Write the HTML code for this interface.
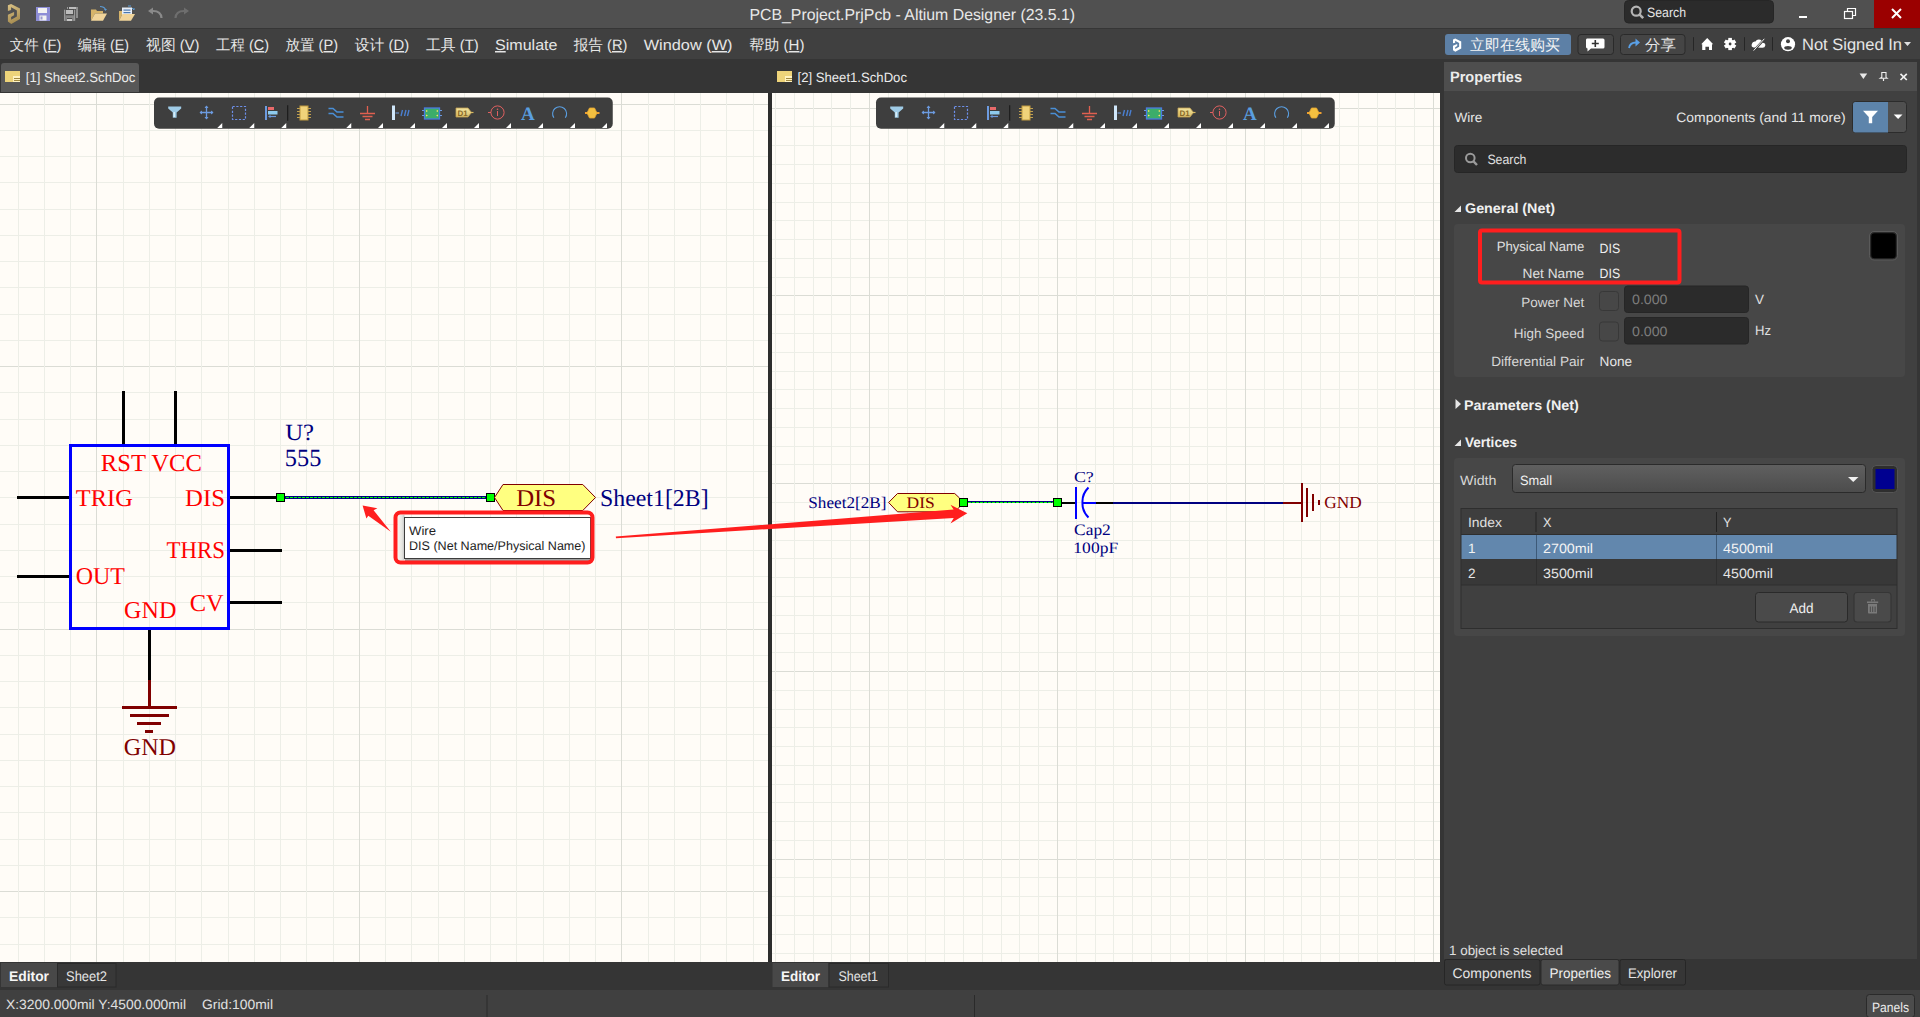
<!DOCTYPE html><html><head><meta charset="utf-8"><style>html,body{margin:0;padding:0;background:#3a3a3a;overflow:hidden}svg{display:block}text{text-rendering:geometricPrecision}</style></head><body><svg width="1920" height="1017" viewBox="0 0 1920 1017"><rect x="0" y="0" width="1920" height="28" fill="#505050" />
<rect x="0" y="28" width="1920" height="1" fill="#363636" />
<rect x="0" y="29" width="1920" height="30" fill="#404040" />
<rect x="0" y="59" width="1444" height="34" fill="#353535" />
<rect x="1440" y="59" width="480" height="903" fill="#353535" />
<rect x="0" y="961" width="1444" height="29" fill="#353535" />
<rect x="0" y="990" width="1920" height="27" fill="#404040" />
<rect x="0" y="93" width="768" height="869" fill="#fffcf7" />
<rect x="0" y="104" width="768" height="1" fill="#dbdcd5"/>
<rect x="0" y="130" width="768" height="1" fill="#edeee7"/>
<rect x="0" y="156" width="768" height="1" fill="#edeee7"/>
<rect x="0" y="182" width="768" height="1" fill="#edeee7"/>
<rect x="0" y="209" width="768" height="1" fill="#edeee7"/>
<rect x="0" y="235" width="768" height="1" fill="#edeee7"/>
<rect x="0" y="261" width="768" height="1" fill="#edeee7"/>
<rect x="0" y="287" width="768" height="1" fill="#edeee7"/>
<rect x="0" y="314" width="768" height="1" fill="#edeee7"/>
<rect x="0" y="340" width="768" height="1" fill="#edeee7"/>
<rect x="0" y="366" width="768" height="1" fill="#dbdcd5"/>
<rect x="0" y="392" width="768" height="1" fill="#edeee7"/>
<rect x="0" y="419" width="768" height="1" fill="#edeee7"/>
<rect x="0" y="445" width="768" height="1" fill="#edeee7"/>
<rect x="0" y="471" width="768" height="1" fill="#edeee7"/>
<rect x="0" y="497" width="768" height="1" fill="#edeee7"/>
<rect x="0" y="524" width="768" height="1" fill="#edeee7"/>
<rect x="0" y="550" width="768" height="1" fill="#edeee7"/>
<rect x="0" y="576" width="768" height="1" fill="#edeee7"/>
<rect x="0" y="602" width="768" height="1" fill="#edeee7"/>
<rect x="0" y="629" width="768" height="1" fill="#dbdcd5"/>
<rect x="0" y="655" width="768" height="1" fill="#edeee7"/>
<rect x="0" y="681" width="768" height="1" fill="#edeee7"/>
<rect x="0" y="707" width="768" height="1" fill="#edeee7"/>
<rect x="0" y="734" width="768" height="1" fill="#edeee7"/>
<rect x="0" y="760" width="768" height="1" fill="#edeee7"/>
<rect x="0" y="786" width="768" height="1" fill="#edeee7"/>
<rect x="0" y="812" width="768" height="1" fill="#edeee7"/>
<rect x="0" y="839" width="768" height="1" fill="#edeee7"/>
<rect x="0" y="865" width="768" height="1" fill="#edeee7"/>
<rect x="0" y="891" width="768" height="1" fill="#dbdcd5"/>
<rect x="0" y="917" width="768" height="1" fill="#edeee7"/>
<rect x="0" y="944" width="768" height="1" fill="#edeee7"/>
<rect x="18" y="93" width="1" height="869" fill="#edeee7"/>
<rect x="44" y="93" width="1" height="869" fill="#edeee7"/>
<rect x="70" y="93" width="1" height="869" fill="#edeee7"/>
<rect x="96" y="93" width="1" height="869" fill="#dbdcd5"/>
<rect x="123" y="93" width="1" height="869" fill="#edeee7"/>
<rect x="149" y="93" width="1" height="869" fill="#edeee7"/>
<rect x="175" y="93" width="1" height="869" fill="#edeee7"/>
<rect x="201" y="93" width="1" height="869" fill="#edeee7"/>
<rect x="228" y="93" width="1" height="869" fill="#edeee7"/>
<rect x="254" y="93" width="1" height="869" fill="#edeee7"/>
<rect x="280" y="93" width="1" height="869" fill="#edeee7"/>
<rect x="306" y="93" width="1" height="869" fill="#edeee7"/>
<rect x="333" y="93" width="1" height="869" fill="#edeee7"/>
<rect x="359" y="93" width="1" height="869" fill="#dbdcd5"/>
<rect x="385" y="93" width="1" height="869" fill="#edeee7"/>
<rect x="411" y="93" width="1" height="869" fill="#edeee7"/>
<rect x="438" y="93" width="1" height="869" fill="#edeee7"/>
<rect x="464" y="93" width="1" height="869" fill="#edeee7"/>
<rect x="490" y="93" width="1" height="869" fill="#edeee7"/>
<rect x="516" y="93" width="1" height="869" fill="#edeee7"/>
<rect x="543" y="93" width="1" height="869" fill="#edeee7"/>
<rect x="569" y="93" width="1" height="869" fill="#edeee7"/>
<rect x="595" y="93" width="1" height="869" fill="#edeee7"/>
<rect x="621" y="93" width="1" height="869" fill="#dbdcd5"/>
<rect x="648" y="93" width="1" height="869" fill="#edeee7"/>
<rect x="674" y="93" width="1" height="869" fill="#edeee7"/>
<rect x="700" y="93" width="1" height="869" fill="#edeee7"/>
<rect x="726" y="93" width="1" height="869" fill="#edeee7"/>
<rect x="753" y="93" width="1" height="869" fill="#edeee7"/>
<rect x="768" y="93" width="4" height="869" fill="#2d2d2d" />
<rect x="772" y="93" width="668" height="869" fill="#fffcf7" />
<rect x="772" y="108" width="668" height="1" fill="#dbdcd5"/>
<rect x="772" y="126" width="668" height="1" fill="#edeee7"/>
<rect x="772" y="145" width="668" height="1" fill="#edeee7"/>
<rect x="772" y="164" width="668" height="1" fill="#edeee7"/>
<rect x="772" y="183" width="668" height="1" fill="#edeee7"/>
<rect x="772" y="202" width="668" height="1" fill="#edeee7"/>
<rect x="772" y="220" width="668" height="1" fill="#edeee7"/>
<rect x="772" y="239" width="668" height="1" fill="#edeee7"/>
<rect x="772" y="258" width="668" height="1" fill="#edeee7"/>
<rect x="772" y="277" width="668" height="1" fill="#edeee7"/>
<rect x="772" y="295" width="668" height="1" fill="#dbdcd5"/>
<rect x="772" y="314" width="668" height="1" fill="#edeee7"/>
<rect x="772" y="333" width="668" height="1" fill="#edeee7"/>
<rect x="772" y="352" width="668" height="1" fill="#edeee7"/>
<rect x="772" y="371" width="668" height="1" fill="#edeee7"/>
<rect x="772" y="389" width="668" height="1" fill="#edeee7"/>
<rect x="772" y="408" width="668" height="1" fill="#edeee7"/>
<rect x="772" y="427" width="668" height="1" fill="#edeee7"/>
<rect x="772" y="446" width="668" height="1" fill="#edeee7"/>
<rect x="772" y="464" width="668" height="1" fill="#edeee7"/>
<rect x="772" y="483" width="668" height="1" fill="#dbdcd5"/>
<rect x="772" y="502" width="668" height="1" fill="#edeee7"/>
<rect x="772" y="521" width="668" height="1" fill="#edeee7"/>
<rect x="772" y="540" width="668" height="1" fill="#edeee7"/>
<rect x="772" y="558" width="668" height="1" fill="#edeee7"/>
<rect x="772" y="577" width="668" height="1" fill="#edeee7"/>
<rect x="772" y="596" width="668" height="1" fill="#edeee7"/>
<rect x="772" y="615" width="668" height="1" fill="#edeee7"/>
<rect x="772" y="633" width="668" height="1" fill="#edeee7"/>
<rect x="772" y="652" width="668" height="1" fill="#edeee7"/>
<rect x="772" y="671" width="668" height="1" fill="#dbdcd5"/>
<rect x="772" y="690" width="668" height="1" fill="#edeee7"/>
<rect x="772" y="709" width="668" height="1" fill="#edeee7"/>
<rect x="772" y="727" width="668" height="1" fill="#edeee7"/>
<rect x="772" y="746" width="668" height="1" fill="#edeee7"/>
<rect x="772" y="765" width="668" height="1" fill="#edeee7"/>
<rect x="772" y="784" width="668" height="1" fill="#edeee7"/>
<rect x="772" y="802" width="668" height="1" fill="#edeee7"/>
<rect x="772" y="821" width="668" height="1" fill="#edeee7"/>
<rect x="772" y="840" width="668" height="1" fill="#edeee7"/>
<rect x="772" y="859" width="668" height="1" fill="#dbdcd5"/>
<rect x="772" y="877" width="668" height="1" fill="#edeee7"/>
<rect x="772" y="896" width="668" height="1" fill="#edeee7"/>
<rect x="772" y="915" width="668" height="1" fill="#edeee7"/>
<rect x="772" y="934" width="668" height="1" fill="#edeee7"/>
<rect x="772" y="953" width="668" height="1" fill="#edeee7"/>
<rect x="775" y="93" width="1" height="869" fill="#edeee7"/>
<rect x="794" y="93" width="1" height="869" fill="#edeee7"/>
<rect x="813" y="93" width="1" height="869" fill="#edeee7"/>
<rect x="831" y="93" width="1" height="869" fill="#edeee7"/>
<rect x="850" y="93" width="1" height="869" fill="#edeee7"/>
<rect x="869" y="93" width="1" height="869" fill="#dbdcd5"/>
<rect x="888" y="93" width="1" height="869" fill="#edeee7"/>
<rect x="907" y="93" width="1" height="869" fill="#edeee7"/>
<rect x="925" y="93" width="1" height="869" fill="#edeee7"/>
<rect x="944" y="93" width="1" height="869" fill="#edeee7"/>
<rect x="963" y="93" width="1" height="869" fill="#edeee7"/>
<rect x="982" y="93" width="1" height="869" fill="#edeee7"/>
<rect x="1001" y="93" width="1" height="869" fill="#edeee7"/>
<rect x="1019" y="93" width="1" height="869" fill="#edeee7"/>
<rect x="1038" y="93" width="1" height="869" fill="#edeee7"/>
<rect x="1057" y="93" width="1" height="869" fill="#dbdcd5"/>
<rect x="1076" y="93" width="1" height="869" fill="#edeee7"/>
<rect x="1095" y="93" width="1" height="869" fill="#edeee7"/>
<rect x="1113" y="93" width="1" height="869" fill="#edeee7"/>
<rect x="1132" y="93" width="1" height="869" fill="#edeee7"/>
<rect x="1151" y="93" width="1" height="869" fill="#edeee7"/>
<rect x="1170" y="93" width="1" height="869" fill="#edeee7"/>
<rect x="1189" y="93" width="1" height="869" fill="#edeee7"/>
<rect x="1207" y="93" width="1" height="869" fill="#edeee7"/>
<rect x="1226" y="93" width="1" height="869" fill="#edeee7"/>
<rect x="1245" y="93" width="1" height="869" fill="#dbdcd5"/>
<rect x="1264" y="93" width="1" height="869" fill="#edeee7"/>
<rect x="1283" y="93" width="1" height="869" fill="#edeee7"/>
<rect x="1301" y="93" width="1" height="869" fill="#edeee7"/>
<rect x="1320" y="93" width="1" height="869" fill="#edeee7"/>
<rect x="1339" y="93" width="1" height="869" fill="#edeee7"/>
<rect x="1358" y="93" width="1" height="869" fill="#edeee7"/>
<rect x="1377" y="93" width="1" height="869" fill="#edeee7"/>
<rect x="1395" y="93" width="1" height="869" fill="#edeee7"/>
<rect x="1414" y="93" width="1" height="869" fill="#edeee7"/>
<rect x="1433" y="93" width="1" height="869" fill="#dbdcd5"/>
<defs><linearGradient id="gold" x1="0" y1="0" x2="0.3" y2="1"><stop offset="0" stop-color="#dcc487"/><stop offset="1" stop-color="#a88e52"/></linearGradient></defs>
<path d="M7.9,5.3 L11.1,3.9 L11.1,10 L7.9,10.9 Z M11.1,3.9 L20,8.4 L16.9,10.5 L11.1,7.2 Z M16.9,10.5 L20,8.4 L20,19 L16.9,16.4 Z M16.9,16.4 L20,19 L11.3,23.9 L11.1,19.7 Z M7.9,14.7 L11.1,17.1 L11.3,23.9 L7.9,21.6 Z M7.9,14.7 L14.1,11.9 L14.1,15.2 L11.1,17.1 Z" fill="url(#gold)"/>
<rect x="36" y="7" width="14" height="14" fill="#8d8dd6" />
<rect x="38" y="8" width="9" height="5" fill="#f2f2f2" />
<rect x="39.5" y="15.5" width="7" height="5" fill="#f2f2f2" />
<rect x="40.5" y="16.5" width="2" height="3" fill="#9a9ad0" />
<rect x="64" y="9.7" width="1.3" height="11.2" fill="#9a9a9a" />
<rect x="74" y="9.7" width="1.2" height="11.2" fill="#9a9a9a" />
<rect x="66" y="10" width="7" height="4" fill="#bdbdbd" />
<rect x="65.3" y="15.3" width="8.7" height="2.7" fill="#888888" />
<rect x="65.3" y="18" width="1.6" height="3" fill="#888888" />
<rect x="72.2" y="18" width="1.8" height="3" fill="#888888" />
<rect x="67" y="19" width="5" height="2" fill="#c8c8c8" />
<rect x="69" y="7" width="7" height="2" fill="#bdbdbd" />
<rect x="67" y="7" width="1" height="2" fill="#9a9a9a" />
<rect x="76" y="7" width="2" height="11" fill="#8e8e8e" />
<path d="M91,9.5 L96,9.5 L97,11 L103,11 L103,13.5 L95,13.5 L91,20.8 Z" fill="#d6b46a"/>
<path d="M95,13.5 L107,13.5 L103,20.8 L91,20.8 Z" fill="#f0d49a"/>
<path d="M100,6.5 Q104,6.5 105.5,9.5" stroke="#5b9bd5" stroke-width="1.2" fill="none"/><path d="M104,9 L107,9 L105.5,11 Z" fill="#5b9bd5"/>
<path d="M119,11 L123,11 L124,12.5 L125,12.5 L125,14 L122.5,14 L119,20.8 Z" fill="#d6b46a"/>
<rect x="122" y="7.5" width="10" height="9" fill="#e8eef6" />
<rect x="123.5" y="9.5" width="7" height="1.2" fill="#4a78b0" />
<rect x="123.5" y="12" width="7" height="1.2" fill="#4a78b0" />
<path d="M122.5,14 L135,14 L131,20.8 L119,20.8 Z" fill="#f0d49a"/>
<path d="M128,6 L131,6" stroke="#5b9bd5" stroke-width="1"/><path d="M132,8 L134,10 M133,9 L135,9" stroke="#5b9bd5" stroke-width="1"/>
<path d="M161.5,18 Q161,11 153,11 L151,11" stroke="#8a8a8a" stroke-width="2.2" fill="none"/><path d="M148,11 L153,7.5 L153,14.5 Z" fill="#8a8a8a"/>
<path d="M175.5,18 Q176,11 184,11 L186,11" stroke="#6e6e6e" stroke-width="2.2" fill="none"/><path d="M189,11 L184,7.5 L184,14.5 Z" fill="#6e6e6e"/>
<text x="749.50" y="19.7" font-family="Liberation Sans" font-size="16.00" fill="#e8e8e8" font-weight="normal" text-anchor="start" textLength="325.50" lengthAdjust="spacingAndGlyphs" >PCB_Project.PrjPcb - Altium Designer (23.5.1)</text>
<rect x="1624.5" y="0.5" width="149" height="22.5" rx="4" fill="#2b2b2b" stroke="#262626"/>
<circle cx="1636.2" cy="11.2" r="4.5" fill="none" stroke="#b4b4b4" stroke-width="2.2"/><path d="M1639.4,14.4 L1643.2,18.2" stroke="#b4b4b4" stroke-width="2.6"/>
<text x="1647.00" y="16.9" font-family="Liberation Sans" font-size="13.50" fill="#e6e6e6" font-weight="normal" text-anchor="start" textLength="39.00" lengthAdjust="spacingAndGlyphs" >Search</text>
<rect x="1799" y="16" width="8" height="2" fill="#ffffff" />
<rect x="1844.5" y="11.5" width="8" height="7" fill="none" stroke="#fff" stroke-width="1.2"/><path d="M1847.5,11.5 L1847.5,8.5 L1855.5,8.5 L1855.5,15.5 L1852.5,15.5" fill="none" stroke="#fff" stroke-width="1.2"/>
<rect x="1874" y="0" width="46" height="28" fill="#9b0000" />
<path d="M1892,9 L1901,18 M1901,9 L1892,18" stroke="#fff" stroke-width="2"/>
<text x="9.8" y="50" font-family="Liberation Sans" font-size="15" fill="#e6e6e6" textLength="51.5" lengthAdjust="spacingAndGlyphs">文件 (<tspan text-decoration="underline">F</tspan>)</text>
<text x="77.7" y="50" font-family="Liberation Sans" font-size="15" fill="#e6e6e6" textLength="51.3" lengthAdjust="spacingAndGlyphs">编辑 (<tspan text-decoration="underline">E</tspan>)</text>
<text x="146.1" y="50" font-family="Liberation Sans" font-size="15" fill="#e6e6e6" textLength="53.4" lengthAdjust="spacingAndGlyphs">视图 (<tspan text-decoration="underline">V</tspan>)</text>
<text x="216.1" y="50" font-family="Liberation Sans" font-size="15" fill="#e6e6e6" textLength="53.0" lengthAdjust="spacingAndGlyphs">工程 (<tspan text-decoration="underline">C</tspan>)</text>
<text x="285.5" y="50" font-family="Liberation Sans" font-size="15" fill="#e6e6e6" textLength="52.5" lengthAdjust="spacingAndGlyphs">放置 (<tspan text-decoration="underline">P</tspan>)</text>
<text x="354.8" y="50" font-family="Liberation Sans" font-size="15" fill="#e6e6e6" textLength="54.3" lengthAdjust="spacingAndGlyphs">设计 (<tspan text-decoration="underline">D</tspan>)</text>
<text x="426" y="50" font-family="Liberation Sans" font-size="15" fill="#e6e6e6" textLength="52.7" lengthAdjust="spacingAndGlyphs">工具 (<tspan text-decoration="underline">T</tspan>)</text>
<text x="495" y="50" font-family="Liberation Sans" font-size="15" fill="#e6e6e6" textLength="62.5" lengthAdjust="spacingAndGlyphs"><tspan text-decoration="underline">S</tspan>imulate</text>
<text x="573.7" y="50" font-family="Liberation Sans" font-size="15" fill="#e6e6e6" textLength="53.8" lengthAdjust="spacingAndGlyphs">报告 (<tspan text-decoration="underline">R</tspan>)</text>
<text x="643.7" y="50" font-family="Liberation Sans" font-size="15" fill="#e6e6e6" textLength="88.8" lengthAdjust="spacingAndGlyphs">Window (<tspan text-decoration="underline">W</tspan>)</text>
<text x="749.2" y="50" font-family="Liberation Sans" font-size="15" fill="#e6e6e6" textLength="55.3" lengthAdjust="spacingAndGlyphs">帮助 (<tspan text-decoration="underline">H</tspan>)</text>
<rect x="1445" y="34" width="126" height="21" rx="3" fill="#5d80a6"/>
<path transform="translate(1447.63,36.03) scale(0.68,0.66)" d="M7.9,5.3 L11.1,3.9 L11.1,10 L7.9,10.9 Z M11.1,3.9 L20,8.4 L16.9,10.5 L11.1,7.2 Z M16.9,10.5 L20,8.4 L20,19 L16.9,16.4 Z M16.9,16.4 L20,19 L11.3,23.9 L11.1,19.7 Z M7.9,14.7 L11.1,17.1 L11.3,23.9 L7.9,21.6 Z M7.9,14.7 L14.1,11.9 L14.1,15.2 L11.1,17.1 Z" fill="#ffffff"/>
<text x="1470.00" y="50" font-family="Liberation Sans" font-size="15.00" fill="#f4f4f4" font-weight="normal" text-anchor="start" textLength="90.00" lengthAdjust="spacingAndGlyphs" >立即在线购买</text>
<rect x="1578" y="34.5" width="35.5" height="20" rx="3" fill="#454545" stroke="#2a2a2a"/>
<path d="M1587,38.5 L1603,38.5 Q1604.5,38.5 1604.5,40 L1604.5,47 Q1604.5,48.5 1603,48.5 L1591,48.5 L1587.5,51.5 L1587.5,48.5 Q1586,48 1586,47 L1586,40 Q1586,38.5 1587,38.5 Z" fill="#fff"/>
<path d="M1595.3,40 L1595.3,47 M1591.8,43.5 L1598.8,43.5" stroke="#333" stroke-width="1.6"/>
<rect x="1620.5" y="34.5" width="64.5" height="20" rx="3" fill="#454545" stroke="#2a2a2a"/>
<path d="M1629,48 Q1630,42.5 1636,42.5 L1637,42.5" stroke="#5aa0e6" stroke-width="1.8" fill="none"/><path d="M1640,42.5 L1635.5,38.5 L1635.5,46.5 Z" fill="#5aa0e6"/>
<text x="1645.00" y="50" font-family="Liberation Sans" font-size="15.00" fill="#e6e6e6" font-weight="normal" text-anchor="start" textLength="31.00" lengthAdjust="spacingAndGlyphs" >分享</text>
<rect x="1693.0" y="37.2" width="1" height="13.5" fill="#262626" />
<rect x="1744.0" y="37.2" width="1" height="13.5" fill="#262626" />
<rect x="1772.0" y="37.2" width="1" height="13.5" fill="#262626" />
<path d="M1707.2,38 L1713.2,44.2 L1712,44.2 L1712,50 L1709,50 L1709,46.8 L1705.4,46.8 L1705.4,50 L1702.2,50 L1702.2,44.2 L1701.2,44.2 Z" fill="#fff"/>
<g transform="translate(1730.1,44)"><circle r="4.6" fill="#fff"/><g fill="#fff"><rect x="-1.8" y="-6.1" width="3.6" height="3" transform="rotate(0)"/><rect x="-1.8" y="-6.1" width="3.6" height="3" transform="rotate(60)"/><rect x="-1.8" y="-6.1" width="3.6" height="3" transform="rotate(120)"/><rect x="-1.8" y="-6.1" width="3.6" height="3" transform="rotate(180)"/><rect x="-1.8" y="-6.1" width="3.6" height="3" transform="rotate(240)"/><rect x="-1.8" y="-6.1" width="3.6" height="3" transform="rotate(300)"/></g><circle r="1.4" fill="#404040"/></g>
<path d="M1753.5,47.5 Q1751,47 1751.8,44 Q1752.5,41 1755.5,41.5 Q1757,38.6 1760.5,39.8 Q1762.5,40.8 1762.6,42.8 Q1765.5,42.8 1765.3,45.5 Q1765,47.8 1762.5,47.8 Z" fill="#fff"/>
<path d="M1753.5,51 L1764.5,39" stroke="#404040" stroke-width="2.2"/><path d="M1753.6,50.6 L1764.3,38.8" stroke="#fff" stroke-width="0.9"/>
<circle cx="1788" cy="44.2" r="7.1" fill="#fff"/><circle cx="1788" cy="41.2" r="2" fill="#404040"/><ellipse cx="1788" cy="47.8" rx="3.8" ry="1.9" fill="#404040"/>
<text x="1802.00" y="50" font-family="Liberation Sans" font-size="16.50" fill="#e6e6e6" font-weight="normal" text-anchor="start" textLength="100.00" lengthAdjust="spacingAndGlyphs" >Not Signed In</text>
<path d="M1904,42 L1911,42 L1907.5,46 Z" fill="#e0e0e0"/>
<path d="M1,92 L1,66 Q1,63 4,63 L136,63 Q139,63 139,66 L139,92 Z" fill="#585858"/>
<rect x="5" y="71" width="15" height="11" fill="#eed47a"/>
<rect x="13" y="76" width="7" height="6" fill="#fff2c0"/>
<rect x="14" y="78" width="6" height="1" fill="#a08840"/><rect x="14" y="80" width="6" height="1" fill="#a08840"/>
<text x="25.80" y="81.6" font-family="Liberation Sans" font-size="13.50" fill="#ececec" font-weight="normal" text-anchor="start" textLength="109.50" lengthAdjust="spacingAndGlyphs" >[1] Sheet2.SchDoc</text>
<rect x="777" y="71" width="15" height="11" fill="#eed47a"/>
<rect x="785" y="76" width="7" height="6" fill="#fff2c0"/>
<rect x="786" y="78" width="6" height="1" fill="#a08840"/><rect x="786" y="80" width="6" height="1" fill="#a08840"/>
<text x="797.50" y="82" font-family="Liberation Sans" font-size="13.50" fill="#ececec" font-weight="normal" text-anchor="start" textLength="109.50" lengthAdjust="spacingAndGlyphs" >[2] Sheet1.SchDoc</text>
<g transform="translate(0,0)">
<rect x="154" y="97.5" width="458.75" height="31.25" rx="5" fill="#3e3e3e"/>
<path d="M168.2,106.5 L181.2,106.5 L181.2,108.5 L176.6,112.5 L176.6,117.7 L172.8,117.7 L172.8,112.5 L168.2,108.5 Z" fill="#9fcbe6"/><rect x="173.5" y="112" width="1.5" height="5" fill="#d8eef8"/>
<path d="M206.5,106 L206.5,119 M200,112.5 L213,112.5" stroke="#6c9be0" stroke-width="1.3"/><path d="M206.5,105.5 L204.5,108 L208.5,108 Z M206.5,119.5 L204.5,117 L208.5,117 Z M199.5,112.5 L202,110.5 L202,114.5 Z M213.5,112.5 L211,110.5 L211,114.5 Z" fill="#6c9be0"/>
<rect x="232.5" y="106.5" width="13" height="13" fill="none" stroke="#6d8fe8" stroke-width="1.2" stroke-dasharray="2.2,1.6"/>
<rect x="265" y="106" width="2" height="14" fill="#6c9be0"/><rect x="268" y="107" width="6" height="3" fill="#e86a6a"/><rect x="268" y="111" width="9.5" height="3.5" fill="#8ecbee"/><path d="M269,116.5 L276,116.5" stroke="#6c9be0" stroke-width="1.2"/><path d="M268,116.5 L270.5,115 L270.5,118 Z" fill="#6c9be0"/>
<rect x="287" y="105.25" width="1.3" height="15.5" fill="#1e1e1e" />
<g stroke="#c0a050" stroke-width="1"><path d="M297,108.5 L300,108.5 M297,111.5 L300,111.5 M297,114.5 L300,114.5 M297,117.5 L300,117.5 M308,108.5 L311,108.5 M308,111.5 L311,111.5 M308,114.5 L311,114.5 M308,117.5 L311,117.5"/></g><rect x="300" y="106" width="8" height="14" fill="#f0d27a" stroke="#c09a40" stroke-width="1"/>
<path d="M328.5,108.5 L333,108.5 L337,112 L343.5,112 M328.5,113.5 L333,113.5 L337,117 L343.5,117" stroke="#4a8fd6" stroke-width="1.6" fill="none"/>
<path d="M367.5,106 L367.5,113 M360,113.5 L375,113.5 M362.5,116.5 L372.5,116.5 M365,119.5 L370,119.5" stroke="#e06050" stroke-width="1.3"/>
<rect x="392" y="105.5" width="3" height="14.5" fill="#cfe6fa"/><path d="M395.5,113 L399,113" stroke="#6c9be0" stroke-width="1"/><path d="M401,116 L402.5,110 M404.5,116 L406,110 M407.5,116 L409,110" stroke="#4a7fd0" stroke-width="1.4"/>
<rect x="424.5" y="108" width="15" height="11" fill="#3cad6a" stroke="#4a7ae0" stroke-width="1.3"/><path d="M426,110 L428,111 L426,112 Z M426,114.5 L428,115.5 L426,116.5 Z M438,110 L436,111 L438,112 Z M438,114.5 L436,115.5 L438,116.5 Z" fill="#ffe060"/><path d="M422,110.5 L424,110.5 M422,115.5 L424,115.5 M440,110.5 L442,110.5 M440,115.5 L442,115.5" stroke="#6c9be0" stroke-width="1"/>
<defs><linearGradient id="d1g" x1="0" y1="0" x2="0" y2="1"><stop offset="0" stop-color="#f4e6a0"/><stop offset="1" stop-color="#d8bc68"/></linearGradient></defs><path d="M456,108 L468,108 L471.5,112.5 L468,117 L456,117 Z" fill="url(#d1g)" stroke="#c0a050" stroke-width="0.8"/><path d="M471,112.5 L473.5,112.5" stroke="#d8b860" stroke-width="1.2"/>
<text x="457.4" y="115.6" font-family="Liberation Sans" font-size="8" font-weight="bold" fill="#8a6a28">D1</text>
<circle cx="497.5" cy="112.5" r="6.6" fill="none" stroke="#e06060" stroke-width="1"/><path d="M488,112.5 L491,112.5 M497.5,111 L497.5,116" stroke="#e06060" stroke-width="1"/><circle cx="497.5" cy="109.2" r="0.8" fill="#e06060"/>
<text x="521" y="120.2" font-family="Liberation Serif" font-size="19" font-weight="bold" fill="#5a9ee0">A</text>
<path d="M553.9,117.8 A7,7 0 1 1 565.3,117.8" fill="none" stroke="#5a9ee0" stroke-width="1.1"/>
<path d="M585,113 L588.5,113 M596,113 L599.5,113" stroke="#f0a030" stroke-width="2"/><path d="M589.5,108 L594.5,108 L597,113 L594.5,118 L589.5,118 L587,113 Z" fill="#f4c040" stroke="#e8a830" stroke-width="0.8"/>
<path d="M222.25,123 L222.25,128 L217.25,128 Z" fill="#ffffff"/>
<path d="M254.25,123 L254.25,128 L249.25,128 Z" fill="#ffffff"/>
<path d="M286.25,123 L286.25,128 L281.25,128 Z" fill="#ffffff"/>
<path d="M351.25,123 L351.25,128 L346.25,128 Z" fill="#ffffff"/>
<path d="M383,123 L383,128 L378,128 Z" fill="#ffffff"/>
<path d="M415,123 L415,128 L410,128 Z" fill="#ffffff"/>
<path d="M447,123 L447,128 L442,128 Z" fill="#ffffff"/>
<path d="M479,123 L479,128 L474,128 Z" fill="#ffffff"/>
<path d="M511,123 L511,128 L506,128 Z" fill="#ffffff"/>
<path d="M543,123 L543,128 L538,128 Z" fill="#ffffff"/>
<path d="M575,123 L575,128 L570,128 Z" fill="#ffffff"/>
<path d="M607,123 L607,128 L602,128 Z" fill="#ffffff"/>
</g>
<g transform="translate(722,0)">
<rect x="154" y="97.5" width="458.75" height="31.25" rx="5" fill="#3e3e3e"/>
<path d="M168.2,106.5 L181.2,106.5 L181.2,108.5 L176.6,112.5 L176.6,117.7 L172.8,117.7 L172.8,112.5 L168.2,108.5 Z" fill="#9fcbe6"/><rect x="173.5" y="112" width="1.5" height="5" fill="#d8eef8"/>
<path d="M206.5,106 L206.5,119 M200,112.5 L213,112.5" stroke="#6c9be0" stroke-width="1.3"/><path d="M206.5,105.5 L204.5,108 L208.5,108 Z M206.5,119.5 L204.5,117 L208.5,117 Z M199.5,112.5 L202,110.5 L202,114.5 Z M213.5,112.5 L211,110.5 L211,114.5 Z" fill="#6c9be0"/>
<rect x="232.5" y="106.5" width="13" height="13" fill="none" stroke="#6d8fe8" stroke-width="1.2" stroke-dasharray="2.2,1.6"/>
<rect x="265" y="106" width="2" height="14" fill="#6c9be0"/><rect x="268" y="107" width="6" height="3" fill="#e86a6a"/><rect x="268" y="111" width="9.5" height="3.5" fill="#8ecbee"/><path d="M269,116.5 L276,116.5" stroke="#6c9be0" stroke-width="1.2"/><path d="M268,116.5 L270.5,115 L270.5,118 Z" fill="#6c9be0"/>
<rect x="287" y="105.25" width="1.3" height="15.5" fill="#1e1e1e" />
<g stroke="#c0a050" stroke-width="1"><path d="M297,108.5 L300,108.5 M297,111.5 L300,111.5 M297,114.5 L300,114.5 M297,117.5 L300,117.5 M308,108.5 L311,108.5 M308,111.5 L311,111.5 M308,114.5 L311,114.5 M308,117.5 L311,117.5"/></g><rect x="300" y="106" width="8" height="14" fill="#f0d27a" stroke="#c09a40" stroke-width="1"/>
<path d="M328.5,108.5 L333,108.5 L337,112 L343.5,112 M328.5,113.5 L333,113.5 L337,117 L343.5,117" stroke="#4a8fd6" stroke-width="1.6" fill="none"/>
<path d="M367.5,106 L367.5,113 M360,113.5 L375,113.5 M362.5,116.5 L372.5,116.5 M365,119.5 L370,119.5" stroke="#e06050" stroke-width="1.3"/>
<rect x="392" y="105.5" width="3" height="14.5" fill="#cfe6fa"/><path d="M395.5,113 L399,113" stroke="#6c9be0" stroke-width="1"/><path d="M401,116 L402.5,110 M404.5,116 L406,110 M407.5,116 L409,110" stroke="#4a7fd0" stroke-width="1.4"/>
<rect x="424.5" y="108" width="15" height="11" fill="#3cad6a" stroke="#4a7ae0" stroke-width="1.3"/><path d="M426,110 L428,111 L426,112 Z M426,114.5 L428,115.5 L426,116.5 Z M438,110 L436,111 L438,112 Z M438,114.5 L436,115.5 L438,116.5 Z" fill="#ffe060"/><path d="M422,110.5 L424,110.5 M422,115.5 L424,115.5 M440,110.5 L442,110.5 M440,115.5 L442,115.5" stroke="#6c9be0" stroke-width="1"/>
<defs><linearGradient id="d1g" x1="0" y1="0" x2="0" y2="1"><stop offset="0" stop-color="#f4e6a0"/><stop offset="1" stop-color="#d8bc68"/></linearGradient></defs><path d="M456,108 L468,108 L471.5,112.5 L468,117 L456,117 Z" fill="url(#d1g)" stroke="#c0a050" stroke-width="0.8"/><path d="M471,112.5 L473.5,112.5" stroke="#d8b860" stroke-width="1.2"/>
<text x="457.4" y="115.6" font-family="Liberation Sans" font-size="8" font-weight="bold" fill="#8a6a28">D1</text>
<circle cx="497.5" cy="112.5" r="6.6" fill="none" stroke="#e06060" stroke-width="1"/><path d="M488,112.5 L491,112.5 M497.5,111 L497.5,116" stroke="#e06060" stroke-width="1"/><circle cx="497.5" cy="109.2" r="0.8" fill="#e06060"/>
<text x="521" y="120.2" font-family="Liberation Serif" font-size="19" font-weight="bold" fill="#5a9ee0">A</text>
<path d="M553.9,117.8 A7,7 0 1 1 565.3,117.8" fill="none" stroke="#5a9ee0" stroke-width="1.1"/>
<path d="M585,113 L588.5,113 M596,113 L599.5,113" stroke="#f0a030" stroke-width="2"/><path d="M589.5,108 L594.5,108 L597,113 L594.5,118 L589.5,118 L587,113 Z" fill="#f4c040" stroke="#e8a830" stroke-width="0.8"/>
<path d="M222.25,123 L222.25,128 L217.25,128 Z" fill="#ffffff"/>
<path d="M254.25,123 L254.25,128 L249.25,128 Z" fill="#ffffff"/>
<path d="M286.25,123 L286.25,128 L281.25,128 Z" fill="#ffffff"/>
<path d="M351.25,123 L351.25,128 L346.25,128 Z" fill="#ffffff"/>
<path d="M383,123 L383,128 L378,128 Z" fill="#ffffff"/>
<path d="M415,123 L415,128 L410,128 Z" fill="#ffffff"/>
<path d="M447,123 L447,128 L442,128 Z" fill="#ffffff"/>
<path d="M479,123 L479,128 L474,128 Z" fill="#ffffff"/>
<path d="M511,123 L511,128 L506,128 Z" fill="#ffffff"/>
<path d="M543,123 L543,128 L538,128 Z" fill="#ffffff"/>
<path d="M575,123 L575,128 L570,128 Z" fill="#ffffff"/>
<path d="M607,123 L607,128 L602,128 Z" fill="#ffffff"/>
</g>
<g shape-rendering="crispEdges">
<rect x="122" y="391" width="3" height="53" fill="#000" />
<rect x="174" y="391" width="3" height="53" fill="#000" />
<rect x="17" y="496" width="52" height="3" fill="#000" />
<rect x="17" y="575" width="52" height="3" fill="#000" />
<rect x="230" y="496" width="46" height="3" fill="#000" />
<rect x="230" y="549" width="52" height="3" fill="#000" />
<rect x="230" y="601" width="52" height="3" fill="#000" />
<rect x="148" y="630" width="3" height="50" fill="#000" />
<rect x="69" y="444" width="161" height="3" fill="#0000ff" />
<rect x="69" y="627" width="161" height="3" fill="#0000ff" />
<rect x="69" y="444" width="3" height="186" fill="#0000ff" />
<rect x="227" y="444" width="3" height="186" fill="#0000ff" />
<rect x="148" y="680" width="3" height="26" fill="#800000" />
<rect x="122" y="706" width="55" height="3" fill="#800000" />
<rect x="130" y="714" width="39" height="3" fill="#800000" />
<rect x="137" y="722" width="24" height="3" fill="#800000" />
<rect x="145" y="730" width="8" height="3" fill="#800000" />
</g>
<text x="100.85" y="471" font-family="Liberation Serif" font-size="24.48" fill="#ff0000" font-weight="normal" text-anchor="start" textLength="101.10" lengthAdjust="spacingAndGlyphs" >RST VCC</text>
<text x="75.88" y="505.7" font-family="Liberation Serif" font-size="24.26" fill="#ff0000" font-weight="normal" text-anchor="start" textLength="56.87" lengthAdjust="spacingAndGlyphs" >TRIG</text>
<text x="185.06" y="505.7" font-family="Liberation Serif" font-size="24.26" fill="#ff0000" font-weight="normal" text-anchor="start" textLength="39.91" lengthAdjust="spacingAndGlyphs" >DIS</text>
<text x="166.44" y="557.8" font-family="Liberation Serif" font-size="24.26" fill="#ff0000" font-weight="normal" text-anchor="start" textLength="58.46" lengthAdjust="spacingAndGlyphs" >THRS</text>
<text x="75.66" y="583.9" font-family="Liberation Serif" font-size="24.26" fill="#ff0000" font-weight="normal" text-anchor="start" textLength="49.31" lengthAdjust="spacingAndGlyphs" >OUT</text>
<text x="124.08" y="617.5" font-family="Liberation Serif" font-size="24.26" fill="#ff0000" font-weight="normal" text-anchor="start" textLength="52.22" lengthAdjust="spacingAndGlyphs" >GND</text>
<text x="189.66" y="610.5" font-family="Liberation Serif" font-size="24.26" fill="#ff0000" font-weight="normal" text-anchor="start" textLength="33.97" lengthAdjust="spacingAndGlyphs" >CV</text>
<text x="123.72" y="755" font-family="Liberation Serif" font-size="24.26" fill="#800000" font-weight="normal" text-anchor="start" textLength="52.32" lengthAdjust="spacingAndGlyphs" >GND</text>
<text x="285.25" y="439.8" font-family="Liberation Serif" font-size="23.28" fill="#000080" font-weight="normal" text-anchor="start" textLength="28.86" lengthAdjust="spacingAndGlyphs" >U?</text>
<text x="284.83" y="466" font-family="Liberation Serif" font-size="24.72" fill="#000080" font-weight="normal" text-anchor="start" textLength="36.45" lengthAdjust="spacingAndGlyphs" >555</text>
<g shape-rendering="crispEdges">
<rect x="285" y="496" width="201" height="3" fill="#000080" />
<line x1="286" y1="497.5" x2="486" y2="497.5" stroke="#00ff00" stroke-width="1" stroke-dasharray="3,1"/>
<rect x="276.5" y="493.5" width="8" height="8" fill="#00ff00" stroke="#000" stroke-width="1"/>
<rect x="486.5" y="493.5" width="8" height="8" fill="#00ff00" stroke="#000" stroke-width="1"/>
</g>
<path d="M494.5,497.5 L503,484.5 L582.75,484.5 L595.5,497.5 L582.75,510.5 L503,510.5 Z" fill="#ffff80" stroke="#800000" stroke-width="1"/>
<text x="516.17" y="505.6" font-family="Liberation Serif" font-size="24.26" fill="#800000" font-weight="normal" text-anchor="start" textLength="39.96" lengthAdjust="spacingAndGlyphs" >DIS</text>
<text x="600.06" y="505.6" font-family="Liberation Serif" font-size="24.00" fill="#000080" font-weight="normal" text-anchor="start" textLength="108.54" lengthAdjust="spacingAndGlyphs" >Sheet1[2B]</text>
<defs><linearGradient id="tsh" x1="0" x2="1"><stop offset="0" stop-color="#f6f5f0"/><stop offset="0.6" stop-color="#e6e6e2"/><stop offset="1" stop-color="#c4c4c4"/></linearGradient></defs>
<rect x="398" y="515" width="6.5" height="45" fill="url(#tsh)" />
<rect x="404.5" y="517.5" width="186" height="41" fill="#ffffff" stroke="#3c3c3c" stroke-width="1"/>
<rect x="405" y="559" width="187" height="2" fill="#a0a0a0" />
<text x="409.00" y="534.5" font-family="Liberation Sans" font-size="12.50" fill="#1e1e1e" font-weight="normal" text-anchor="start" textLength="27.00" lengthAdjust="spacingAndGlyphs" >Wire</text>
<text x="409.00" y="550.1" font-family="Liberation Sans" font-size="12.50" fill="#1e1e1e" font-weight="normal" text-anchor="start" textLength="176.50" lengthAdjust="spacingAndGlyphs" >DIS (Net Name/Physical Name)</text>
<rect x="395.5" y="512.5" width="197" height="50" rx="5" fill="none" stroke="#ff1e1e" stroke-width="4"/>
<path d="M362.6,505.6 L377.4,508.3 L373.6,510.3 L390.8,531.7 L368.3,515.8 L366.4,518.6 Z" fill="#ff1e1e"/>
<text x="808.33" y="507.7" font-family="Liberation Serif" font-size="16.24" fill="#000080" font-weight="normal" text-anchor="start" textLength="78.18" lengthAdjust="spacingAndGlyphs" >Sheet2[2B]</text>
<path d="M888.6,502.5 L897.5,493.5 L954.7,493.5 L959.5,498 L959.5,507 L954.7,511.8 L897.5,511.8 Z" fill="#ffff80" stroke="#800000" stroke-width="1"/>
<text x="906.53" y="507.8" font-family="Liberation Serif" font-size="16.05" fill="#800000" font-weight="normal" text-anchor="start" textLength="28.19" lengthAdjust="spacingAndGlyphs" >DIS</text>
<g shape-rendering="crispEdges">
<rect x="968" y="501" width="85" height="2" fill="#000080" />
<line x1="968" y1="502.5" x2="1053" y2="502.5" stroke="#00ff00" stroke-width="1" stroke-dasharray="3,1"/>
<rect x="959.5" y="498.5" width="8" height="8" fill="#00ff00" stroke="#000" stroke-width="1"/>
<rect x="1053.5" y="498.5" width="8" height="8" fill="#00ff00" stroke="#000" stroke-width="1"/>
<rect x="1062" y="502" width="13" height="2" fill="#000" />
<rect x="1075" y="487" width="2" height="32" fill="#0000ff" />
<rect x="1083" y="502" width="13" height="2" fill="#0000ff" />
<rect x="1096" y="502" width="17" height="2" fill="#000" />
<rect x="1113" y="502" width="170" height="2" fill="#000080" />
<rect x="1283" y="502" width="18" height="2" fill="#800000" />
<rect x="1301" y="483" width="2" height="39" fill="#800000" />
<rect x="1306" y="488" width="2" height="29" fill="#800000" />
<rect x="1312" y="494" width="2" height="17" fill="#800000" />
<rect x="1318" y="500" width="2" height="5" fill="#800000" />
</g>
<path d="M1088.5,487.5 Q1082,494 1082.5,502.5 Q1082,511 1088.5,517.5" fill="none" stroke="#0000ff" stroke-width="2"/>
<text x="1073.91" y="481.6" font-family="Liberation Serif" font-size="15.16" fill="#000080" font-weight="normal" text-anchor="start" textLength="19.94" lengthAdjust="spacingAndGlyphs" >C?</text>
<text x="1074.09" y="534.7" font-family="Liberation Serif" font-size="16.00" fill="#000080" font-weight="normal" text-anchor="start" textLength="36.71" lengthAdjust="spacingAndGlyphs" >Cap2</text>
<text x="1073.39" y="552.9" font-family="Liberation Serif" font-size="15.84" fill="#000080" font-weight="normal" text-anchor="start" textLength="44.75" lengthAdjust="spacingAndGlyphs" >100pF</text>
<text x="1324.17" y="507.8" font-family="Liberation Serif" font-size="16.92" fill="#800000" font-weight="normal" text-anchor="start" textLength="37.48" lengthAdjust="spacingAndGlyphs" >GND</text>
<path d="M615.8,536.6 L953.6,509.6 L950.5,504.8 L967.3,513.3 L950.5,523.6 L953.7,518 L616,538.2 Z" fill="#ff1e1e"/>
<rect x="1440" y="59" width="4" height="903" fill="#353535" />
<rect x="1444" y="62" width="473" height="29" fill="#4e4e4e" />
<rect x="1444" y="91" width="473" height="868" fill="#404040" />
<text x="1450.00" y="82" font-family="Liberation Sans" font-size="15.00" fill="#ececec" font-weight="bold" text-anchor="start" textLength="72.00" lengthAdjust="spacingAndGlyphs" >Properties</text>
<path d="M1859.6,73.5 L1867.2,73.5 L1863.4,79 Z" fill="#e8e8e8"/>
<path d="M1881.8,72.5 L1886,72.5 L1886,77.3 L1887.2,78.3 L1880.3,78.3 L1881.8,77.3 Z" fill="none" stroke="#f0f0f0" stroke-width="1.1"/><path d="M1883.5,78.5 L1883.5,81" stroke="#f0f0f0" stroke-width="1.2"/>
<path d="M1900.5,73.8 L1906.8,80 M1906.8,73.8 L1900.5,80" stroke="#f0f0f0" stroke-width="1.7"/>
<text x="1454.40" y="122.2" font-family="Liberation Sans" font-size="13.50" fill="#e6e6e6" font-weight="normal" text-anchor="start" textLength="28.00" lengthAdjust="spacingAndGlyphs" >Wire</text>
<text x="1676.30" y="122.2" font-family="Liberation Sans" font-size="13.50" fill="#e6e6e6" font-weight="normal" text-anchor="start" textLength="169.30" lengthAdjust="spacingAndGlyphs" >Components (and 11 more)</text>
<rect x="1852.5" y="101.5" width="54" height="31" rx="3" fill="#505050" stroke="#2c2c2c"/>
<path d="M1853,104.5 Q1853,102 1855.5,102 L1888,102 L1888,132.5 L1855.5,132.5 Q1853,132.5 1853,130 Z" fill="#5d84ab"/>
<path d="M1863,110.7 L1878,110.7 L1872.2,117 L1872.2,123.3 L1868.8,123.3 L1868.8,117 Z" fill="#fff"/>
<path d="M1893.7,114.5 L1902.5,114.5 L1898.1,119.1 Z" fill="#fff"/>
<rect x="1454.5" y="145.5" width="452" height="27" rx="3" fill="#2c2c2c" stroke="#262626"/>
<circle cx="1470.3" cy="158" r="4.3" fill="none" stroke="#9a9a9a" stroke-width="2"/><path d="M1473.3,161.2 L1477,165" stroke="#9a9a9a" stroke-width="2.4"/>
<text x="1487.40" y="163.9" font-family="Liberation Sans" font-size="13.50" fill="#e0e0e0" font-weight="normal" text-anchor="start" textLength="39.00" lengthAdjust="spacingAndGlyphs" >Search</text>
<path d="M1454.5,212 L1461,212 L1461,205.5 Z" fill="#e6e6e6"/>
<text x="1465.00" y="213.2" font-family="Liberation Sans" font-size="14.00" fill="#f0f0f0" font-weight="bold" text-anchor="start" textLength="90.00" lengthAdjust="spacingAndGlyphs" >General (Net)</text>
<rect x="1454" y="224" width="451" height="153" rx="4" fill="#474747"/>
<text x="1584.20" y="250.8" font-family="Liberation Sans" font-size="13.50" fill="#e0e0e0" font-weight="normal" text-anchor="end" textLength="87.50" lengthAdjust="spacingAndGlyphs" >Physical Name</text>
<text x="1599.60" y="252.9" font-family="Liberation Sans" font-size="13.50" fill="#f0f0f0" font-weight="normal" text-anchor="start" textLength="20.50" lengthAdjust="spacingAndGlyphs" >DIS</text>
<text x="1584.20" y="277.9" font-family="Liberation Sans" font-size="13.50" fill="#e0e0e0" font-weight="normal" text-anchor="end" textLength="61.70" lengthAdjust="spacingAndGlyphs" >Net Name</text>
<text x="1599.60" y="278" font-family="Liberation Sans" font-size="13.50" fill="#f0f0f0" font-weight="normal" text-anchor="start" textLength="20.50" lengthAdjust="spacingAndGlyphs" >DIS</text>
<rect x="1480" y="230.5" width="199.5" height="52" rx="2" fill="none" stroke="#ff1e1e" stroke-width="4"/>
<rect x="1870.5" y="232.5" width="26" height="26.5" rx="4" fill="#000" stroke="#2a2a2a" stroke-width="1.5"/>
<rect x="1869.5" y="231.5" width="28" height="28.5" rx="4.5" fill="none" stroke="#5a5a5a" stroke-width="1"/>
<text x="1584.20" y="307" font-family="Liberation Sans" font-size="13.50" fill="#d8d8d8" font-weight="normal" text-anchor="end" textLength="63.00" lengthAdjust="spacingAndGlyphs" >Power Net</text>
<rect x="1599.5" y="291.5" width="19" height="19" rx="3" fill="#474747" stroke="#383838" />
<rect x="1624.5" y="286" width="124" height="26.5" rx="3" fill="#2b2b2b" stroke="#262626"/>
<text x="1632.00" y="304" font-family="Liberation Sans" font-size="13.50" fill="#7d7d7d" font-weight="normal" text-anchor="start" textLength="35.50" lengthAdjust="spacingAndGlyphs" >0.000</text>
<text x="1755.00" y="304" font-family="Liberation Sans" font-size="13.50" fill="#e0e0e0" font-weight="normal" text-anchor="start" textLength="9.00" lengthAdjust="spacingAndGlyphs" >V</text>
<text x="1584.20" y="337.9" font-family="Liberation Sans" font-size="13.50" fill="#d8d8d8" font-weight="normal" text-anchor="end" textLength="70.50" lengthAdjust="spacingAndGlyphs" >High Speed</text>
<rect x="1599.5" y="322" width="19" height="19" rx="3" fill="#474747" stroke="#383838" />
<rect x="1624.5" y="317.5" width="124" height="26.5" rx="3" fill="#2b2b2b" stroke="#262626"/>
<text x="1632.00" y="336" font-family="Liberation Sans" font-size="13.50" fill="#7d7d7d" font-weight="normal" text-anchor="start" textLength="35.50" lengthAdjust="spacingAndGlyphs" >0.000</text>
<text x="1755.00" y="335.4" font-family="Liberation Sans" font-size="13.50" fill="#e0e0e0" font-weight="normal" text-anchor="start" textLength="16.00" lengthAdjust="spacingAndGlyphs" >Hz</text>
<text x="1584.20" y="366.2" font-family="Liberation Sans" font-size="13.50" fill="#d8d8d8" font-weight="normal" text-anchor="end" textLength="93.00" lengthAdjust="spacingAndGlyphs" >Differential Pair</text>
<text x="1599.60" y="366.2" font-family="Liberation Sans" font-size="13.50" fill="#e6e6e6" font-weight="normal" text-anchor="start" textLength="32.50" lengthAdjust="spacingAndGlyphs" >None</text>
<path d="M1455.5,399 L1461,404 L1455.5,409 Z" fill="#e6e6e6"/>
<text x="1464.00" y="410.4" font-family="Liberation Sans" font-size="14.00" fill="#f0f0f0" font-weight="bold" text-anchor="start" textLength="114.80" lengthAdjust="spacingAndGlyphs" >Parameters (Net)</text>
<path d="M1454.5,446 L1461,446 L1461,439.5 Z" fill="#e6e6e6"/>
<text x="1465.00" y="447" font-family="Liberation Sans" font-size="14.00" fill="#f0f0f0" font-weight="bold" text-anchor="start" textLength="52.00" lengthAdjust="spacingAndGlyphs" >Vertices</text>
<rect x="1454" y="458" width="451" height="178" rx="4" fill="#474747"/>
<text x="1460.00" y="484.5" font-family="Liberation Sans" font-size="13.50" fill="#d8d8d8" font-weight="normal" text-anchor="start" textLength="36.50" lengthAdjust="spacingAndGlyphs" >Width</text>
<defs><linearGradient id="dd" x1="0" y1="0" x2="0" y2="1"><stop offset="0" stop-color="#606060"/><stop offset="1" stop-color="#4c4c4c"/></linearGradient></defs>
<rect x="1512.5" y="464.5" width="353" height="28" rx="3" fill="url(#dd)" stroke="#2b2b2b"/>
<text x="1520.00" y="484.5" font-family="Liberation Sans" font-size="13.50" fill="#f0f0f0" font-weight="normal" text-anchor="start" textLength="32.00" lengthAdjust="spacingAndGlyphs" >Small</text>
<path d="M1848,477 L1858.5,477 L1853.25,482 Z" fill="#f0f0f0"/>
<rect x="1872" y="465.5" width="25.5" height="27" rx="4" fill="#2e2e2e" stroke="#555" stroke-width="1"/>
<rect x="1875.5" y="469" width="19" height="20" fill="#000090" />
<rect x="1460.5" y="508" width="437" height="121" fill="#2e2e2e" />
<rect x="1461.5" y="509" width="435" height="25" fill="#3e3e3e" />
<rect x="1535.5" y="512" width="1" height="20" fill="#222" />
<rect x="1716" y="512" width="1" height="20" fill="#222" />
<text x="1468.00" y="527" font-family="Liberation Sans" font-size="13.50" fill="#e0e0e0" font-weight="normal" text-anchor="start" textLength="34.00" lengthAdjust="spacingAndGlyphs" >Index</text>
<text x="1543.00" y="527" font-family="Liberation Sans" font-size="13.50" fill="#e0e0e0" font-weight="normal" text-anchor="start" textLength="8.50" lengthAdjust="spacingAndGlyphs" >X</text>
<text x="1723.00" y="527" font-family="Liberation Sans" font-size="13.50" fill="#e0e0e0" font-weight="normal" text-anchor="start" textLength="8.50" lengthAdjust="spacingAndGlyphs" >Y</text>
<rect x="1461.5" y="535" width="435" height="24" fill="#6287ad" />
<rect x="1536" y="535" width="1" height="24" fill="#3d5a78" />
<rect x="1716" y="535" width="1" height="24" fill="#3d5a78" />
<text x="1468.00" y="552.5" font-family="Liberation Sans" font-size="13.50" fill="#f4f4f4" font-weight="normal" text-anchor="start" >1</text>
<text x="1543.00" y="552.5" font-family="Liberation Sans" font-size="13.50" fill="#f4f4f4" font-weight="normal" text-anchor="start" textLength="50.00" lengthAdjust="spacingAndGlyphs" >2700mil</text>
<text x="1723.00" y="552.5" font-family="Liberation Sans" font-size="13.50" fill="#f4f4f4" font-weight="normal" text-anchor="start" textLength="50.00" lengthAdjust="spacingAndGlyphs" >4500mil</text>
<rect x="1461.5" y="559" width="435" height="25.5" fill="#383838" />
<rect x="1536" y="559" width="1" height="25.5" fill="#2e2e2e" />
<rect x="1716" y="559" width="1" height="25.5" fill="#2e2e2e" />
<text x="1468.00" y="577.5" font-family="Liberation Sans" font-size="13.50" fill="#e6e6e6" font-weight="normal" text-anchor="start" >2</text>
<text x="1543.00" y="577.5" font-family="Liberation Sans" font-size="13.50" fill="#e6e6e6" font-weight="normal" text-anchor="start" textLength="50.00" lengthAdjust="spacingAndGlyphs" >3500mil</text>
<text x="1723.00" y="577.5" font-family="Liberation Sans" font-size="13.50" fill="#e6e6e6" font-weight="normal" text-anchor="start" textLength="50.00" lengthAdjust="spacingAndGlyphs" >4500mil</text>
<rect x="1461.5" y="585.5" width="435" height="42.5" fill="#404040" />
<rect x="1755.5" y="592.5" width="92" height="29.5" rx="3" fill="#4a4a4a" stroke="#2a2a2a"/>
<text x="1801.50" y="613" font-family="Liberation Sans" font-size="14.00" fill="#f0f0f0" font-weight="normal" text-anchor="middle" textLength="24.00" lengthAdjust="spacingAndGlyphs" >Add</text>
<rect x="1854" y="592.5" width="37" height="29.5" rx="3" fill="#4a4a4a" stroke="#363636" stroke-width="1.2"/>
<g fill="#7a7a7a"><rect x="1867" y="601.5" width="11.2" height="1.6"/><path d="M1871,601.5 L1871,599.3 L1874.8,599.3 L1874.8,601.5 L1874,601.5 L1874,600.2 L1871.8,600.2 L1871.8,601.5 Z"/><path d="M1868,604 L1877,604 L1877,613.5 L1868.8,613.5 Q1868,613.5 1868,612.5 Z"/></g><g fill="#4a4a4a"><rect x="1869.8" y="606.5" width="1" height="5.5"/><rect x="1872.2" y="606.5" width="1" height="5.5"/><rect x="1874.6" y="606.5" width="1" height="5.5"/></g>
<text x="1449.00" y="955" font-family="Liberation Sans" font-size="13.50" fill="#e0e0e0" font-weight="normal" text-anchor="start" textLength="114.00" lengthAdjust="spacingAndGlyphs" >1 object is selected</text>
<rect x="1440" y="959" width="480" height="31" fill="#353535" />
<rect x="1444.5" y="959.5" width="95.5" height="25.5" rx="2" fill="#363636" stroke="#262626"/>
<rect x="1541" y="959.5" width="78" height="25.5" rx="2" fill="#4a4a4a" stroke="#2a2a2a"/>
<rect x="1620" y="959.5" width="65.5" height="25.5" rx="2" fill="#363636" stroke="#262626"/>
<text x="1452.50" y="978" font-family="Liberation Sans" font-size="14.00" fill="#e6e6e6" font-weight="normal" text-anchor="start" textLength="79.00" lengthAdjust="spacingAndGlyphs" >Components</text>
<text x="1549.50" y="978" font-family="Liberation Sans" font-size="14.00" fill="#f0f0f0" font-weight="normal" text-anchor="start" textLength="61.50" lengthAdjust="spacingAndGlyphs" >Properties</text>
<text x="1628.00" y="978" font-family="Liberation Sans" font-size="14.00" fill="#e6e6e6" font-weight="normal" text-anchor="start" textLength="49.00" lengthAdjust="spacingAndGlyphs" >Explorer</text>
<rect x="1" y="963" width="56" height="24" fill="#484848"/>
<rect x="57.5" y="963.5" width="58.5" height="23.5" fill="#383838" stroke="#2a2a2a"/>
<text x="9.00" y="981" font-family="Liberation Sans" font-size="14.00" fill="#f6f6f6" font-weight="bold" text-anchor="start" textLength="40.00" lengthAdjust="spacingAndGlyphs" >Editor</text>
<text x="66.00" y="981" font-family="Liberation Sans" font-size="14.00" fill="#e6e6e6" font-weight="normal" text-anchor="start" textLength="41.00" lengthAdjust="spacingAndGlyphs" >Sheet2</text>
<rect x="772.5" y="963" width="56" height="24" fill="#484848"/>
<rect x="829" y="963.5" width="59.5" height="23.5" fill="#383838" stroke="#2a2a2a"/>
<text x="781.00" y="980.6" font-family="Liberation Sans" font-size="14.00" fill="#f6f6f6" font-weight="bold" text-anchor="start" textLength="39.00" lengthAdjust="spacingAndGlyphs" >Editor</text>
<text x="838.40" y="980.6" font-family="Liberation Sans" font-size="14.00" fill="#e6e6e6" font-weight="normal" text-anchor="start" textLength="39.60" lengthAdjust="spacingAndGlyphs" >Sheet1</text>
<text x="6.00" y="1008.5" font-family="Liberation Sans" font-size="13.50" fill="#e0e0e0" font-weight="normal" text-anchor="start" textLength="180.00" lengthAdjust="spacingAndGlyphs" >X:3200.000mil Y:4500.000mil</text>
<text x="202.00" y="1008.5" font-family="Liberation Sans" font-size="13.50" fill="#e0e0e0" font-weight="normal" text-anchor="start" textLength="71.00" lengthAdjust="spacingAndGlyphs" >Grid:100mil</text>
<rect x="486.5" y="995" width="1" height="22" fill="#2a2a2a" />
<rect x="974" y="995" width="1" height="22" fill="#2a2a2a" />
<rect x="1866.5" y="994.5" width="48" height="23" rx="3" fill="#4c4c4c" stroke="#2a2a2a"/>
<text x="1872.00" y="1012" font-family="Liberation Sans" font-size="13.50" fill="#ececec" font-weight="normal" text-anchor="start" textLength="37.00" lengthAdjust="spacingAndGlyphs" >Panels</text></svg></body></html>
